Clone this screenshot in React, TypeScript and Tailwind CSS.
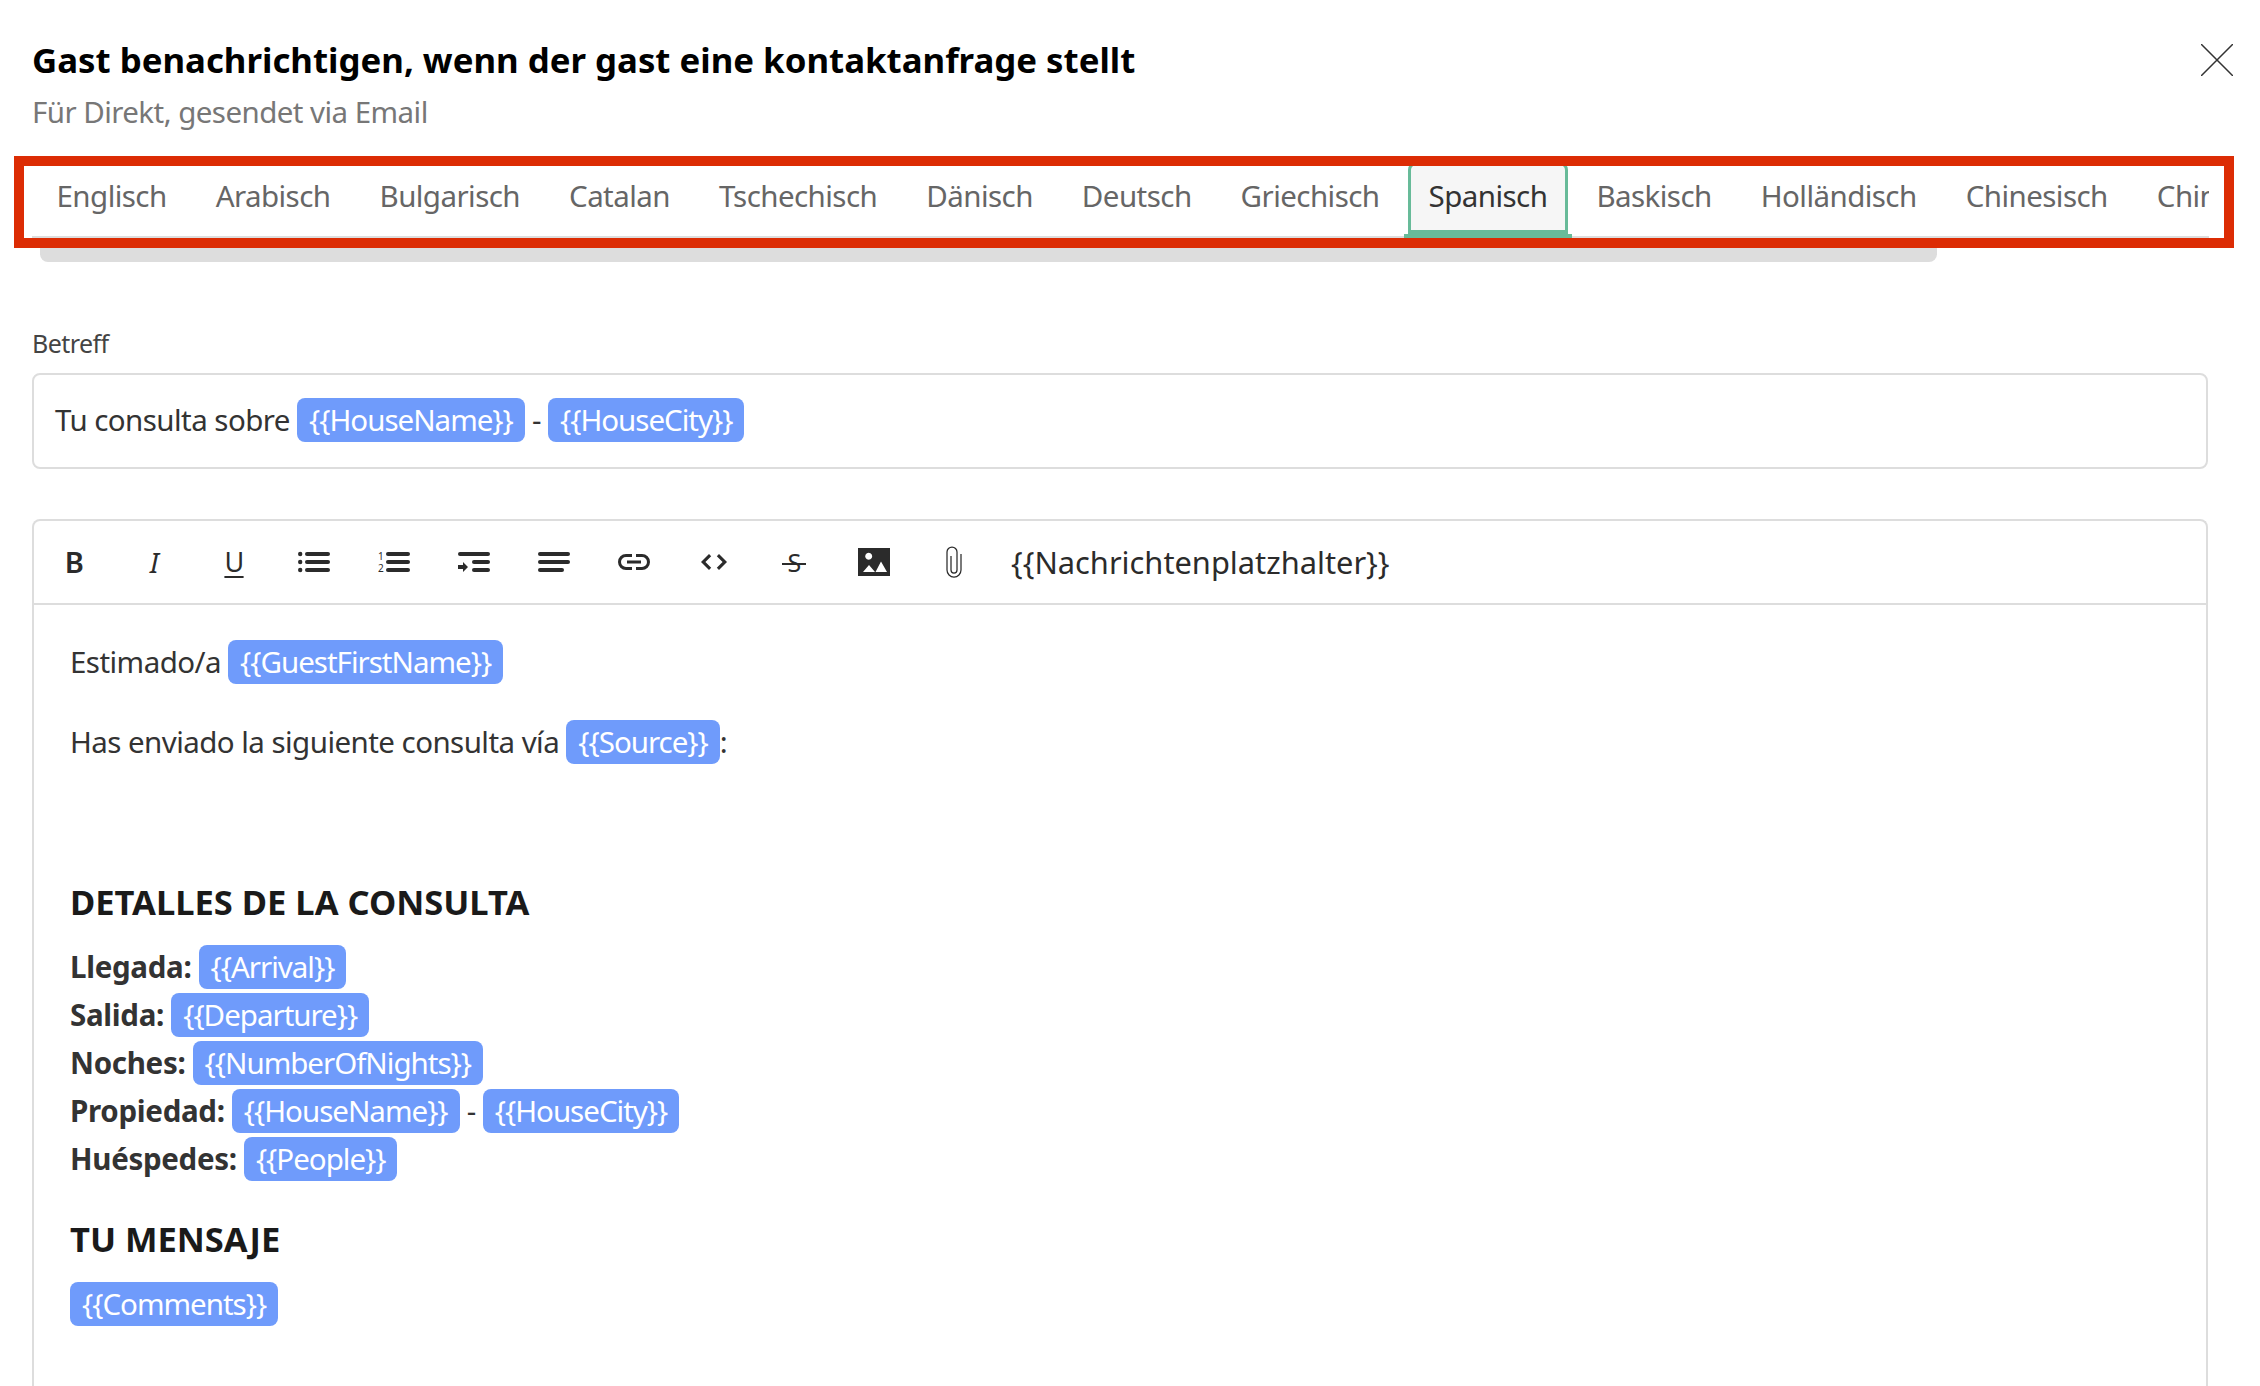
const tabs = ['Englisch', 'Arabisch', 'Bulgarisch', 'Catalan', 'Tschechisch', 'Dänisch', 'Deutsch', 'Griechisch', 'Spanisch', 'Baskisch', 'Holländisch', 'Chinesisch', 'Chinesisch'];

function Chip({ children }: { children: string }) {
  return (
    <span className="inline-block h-[44px] rounded-lg bg-[#6f9bfb] px-3 font-normal leading-[44px] tracking-[-1px] text-white">
      {children}
    </span>
  );
}

function Tool({ children }: { children: React.ReactNode }) {
  return <div className="flex h-full w-20 shrink-0 items-center justify-center text-[#2b2b2b]">{children}</div>;
}

function Icon({ children }: { children: React.ReactNode }) {
  return (
    <svg width="32" height="32" viewBox="0 0 32 32" fill="currentColor">
      {children}
    </svg>
  );
}

function Label({ children }: { children: string }) {
  return <strong className="tracking-[-0.3px]">{children}</strong>;
}

export default function App() {
  return (
    <main className="flex h-[1386px] flex-col overflow-hidden bg-white px-8 font-['Noto_Sans',sans-serif] text-[29.5px] tracking-[-0.55px] text-[#333]">
      <div className="relative pt-[34px]">
        <h1 className="text-[34.8px] font-bold leading-[52px] tracking-normal text-black">Gast benachrichtigen, wenn der gast eine kontaktanfrage stellt</h1>
        <p className="text-[29.5px] leading-[52px] text-[#777]">Für Direkt, gesendet via Email</p>
        <svg className="absolute right-[-5px] top-[44px] text-[#333]" width="32" height="32" viewBox="0 0 32 32" fill="none" stroke="currentColor" strokeWidth="1.5">
          <path d="M0 0l32 32M32 0L0 32" />
        </svg>
      </div>

      <div className="relative mt-[24px] w-[2177px]">
        <div className="flex h-[76px] overflow-hidden">
          {tabs.map((tab, i) => (
            <div key={i} className={`relative flex h-[76px] shrink-0 items-center border-b-2 border-[#dddddd] px-[24.5px] ${i === 8 ? 'text-[#333]' : 'text-[#666]'}`}>
              {i === 8 && (
                <>
                  <div className="absolute inset-x-[4px] bottom-[2px] top-0 rounded-t-lg border-x-[3px] border-t-[3px] border-b-[4px] border-[#68bb99] bg-[#f6f6f6]" />
                  <div className="absolute inset-x-0 bottom-[-2px] h-[4px] bg-[#68bb99]" />
                </>
              )}
              <span className="relative pb-[6px]">{tab}</span>
            </div>
          ))}
        </div>
        <div className="ml-2 h-6 w-[1897px] rounded-b-lg bg-[#dddddd]" />
        <div className="absolute left-[-18px] top-[-6px] h-[92px] w-[2220px] border-[10px] border-[#dc2c04]" />
      </div>

      <label className="mt-[63px] block text-[25px] leading-[36px] text-[#444]">Betreff</label>
      <div className="mt-[12px] flex h-[96px] w-[2176px] shrink-0 items-center rounded-lg border-2 border-[#dddddd] px-[21px] pb-[2px]">
        <div>
          Tu consulta sobre <Chip>{'{{HouseName}}'}</Chip> - <Chip>{'{{HouseCity}}'}</Chip>
        </div>
      </div>

      <div className="mt-[50px] w-[2176px] flex-1 rounded-t-lg border-x-2 border-t-2 border-[#dddddd]">
        <div className="flex h-[84px] items-center border-b-2 border-[#dddddd]">
          <Tool><span className="text-[29px] font-semibold">B</span></Tool>
          <Tool><span className="text-[28px] italic">I</span></Tool>
          <Tool><span className="text-[27px] underline underline-offset-4">U</span></Tool>
          <Tool>
            <Icon>
              <circle cx="2.200" cy="8" r="2.200" /><circle cx="2.200" cy="16" r="2.200" /><circle cx="2.200" cy="24" r="2.200" />
              <rect x="7" y="6" width="25" height="4" rx="2" /><rect x="7" y="14" width="25" height="4" rx="2" /><rect x="7" y="22" width="25" height="4" rx="2" />
            </Icon>
          </Tool>
          <Tool>
            <Icon>
              <text x="0" y="14" fontSize="10" fontFamily="Noto Sans">1</text>
              <text x="0" y="26" fontSize="10" fontFamily="Noto Sans">2</text>
              <rect x="8" y="6" width="24" height="4" rx="2" /><rect x="8" y="14" width="24" height="4" rx="2" /><rect x="8" y="22" width="24" height="4" rx="2" />
            </Icon>
          </Tool>
          <Tool>
            <Icon>
              <rect x="0" y="6" width="32" height="4" rx="2" /><rect x="14" y="14" width="18" height="4" rx="2" /><rect x="14" y="22" width="18" height="4" rx="2" />
              <path d="M0 19h5v-3l5 5-5 5v-3H0z" />
            </Icon>
          </Tool>
          <Tool>
            <Icon>
              <rect x="0" y="6" width="32" height="4" rx="2" /><rect x="0" y="14" width="32" height="4" rx="2" /><rect x="0" y="22" width="26" height="4" rx="2" />
            </Icon>
          </Tool>
          <Tool>
            <Icon>
              <path d="M8 8h6v3H8a5 5 0 0 0 0 10h6v3H8A8 8 0 0 1 8 8zm10 0h6a8 8 0 0 1 0 16h-6v-3h6a5 5 0 0 0 0-10h-6z" />
              <rect x="9" y="14.500" width="14" height="3" />
            </Icon>
          </Tool>
          <Tool>
            <Icon>
              <path d="M11 8l2.200 2.200L7.400 16l5.800 5.800L11 24l-8-8zM21 8l8 8-8 8-2.200-2.200 5.800-5.800-5.800-5.800z" />
            </Icon>
          </Tool>
          <Tool>
            <div className="relative flex h-8 w-6 items-center justify-center">
              <span className="text-[25px] leading-none">S</span>
              <div className="absolute inset-x-0 top-[17px] h-[2px] bg-[#2b2b2b]" />
            </div>
          </Tool>
          <Tool>
            <Icon>
              <path fillRule="evenodd" d="M0 2h32v28H0zM10.700 13.800a3.500 3.500 0 1 0-.01 0zM5 26h12l-6-7zM17.500 26H29l-6-10.500z" />
            </Icon>
          </Tool>
          <Tool>
            <svg width="16" height="32" viewBox="0 0 16 32" fill="none" stroke="currentColor" strokeWidth="1.25">
              <path d="M5 10v14a3 3 0 0 0 6 0V6a5 5 0 0 0-10 0v18a7 7 0 0 0 14 0V8" />
            </svg>
          </Tool>
          <span className="ml-[17px] text-[30.800px] tracking-normal text-[#2b2b2b]">{'{{Nachrichtenplatzhalter}}'}</span>
        </div>

        <div className="px-[36px] pt-[33px] leading-[48px]">
          <p>Estimado/a <Chip>{'{{GuestFirstName}}'}</Chip></p>
          <p className="mt-8">Has enviado la siguiente consulta vía <Chip>{'{{Source}}'}</Chip>:</p>
          <h2 className="mt-[112px] text-[34.500px] font-bold tracking-normal text-[#1a1a1a]">DETALLES DE LA CONSULTA</h2>
          <div className="mt-[17px]">
            <p><Label>Llegada:</Label> <Chip>{'{{Arrival}}'}</Chip></p>
            <p><Label>Salida:</Label> <Chip>{'{{Departure}}'}</Chip></p>
            <p><Label>Noches:</Label> <Chip>{'{{NumberOfNights}}'}</Chip></p>
            <p><Label>Propiedad:</Label> <Chip>{'{{HouseName}}'}</Chip> - <Chip>{'{{HouseCity}}'}</Chip></p>
            <p><Label>Huéspedes:</Label> <Chip>{'{{People}}'}</Chip></p>
          </div>
          <h2 className="mt-[32px] text-[34.500px] font-bold tracking-normal text-[#1a1a1a]">TU MENSAJE</h2>
          <p className="mt-[17px]"><Chip>{'{{Comments}}'}</Chip></p>
        </div>
      </div>
    </main>
  );
}
